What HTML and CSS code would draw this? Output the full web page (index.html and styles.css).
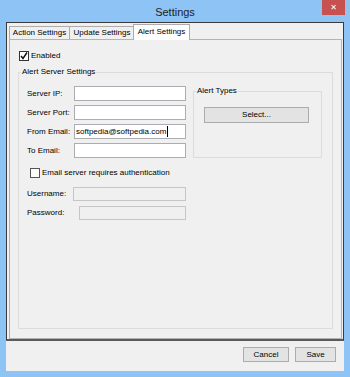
FILE: index.html
```html
<!DOCTYPE html>
<html>
<head>
<meta charset="utf-8">
<link rel="stylesheet" href="styles.css">
</head>
<body>
<div class="window">
  <div class="titlebar">
    <div class="title">Settings</div>
    <div class="close">&#x2715;</div>
  </div>
  <div class="client">
    <div class="frame">
      <div class="tabs">
        <div class="tab tab-action">Action Settings</div>
        <div class="tab tab-update">Update Settings</div>
        <div class="tab tab-alert active">Alert Settings</div>
      </div>
      <div class="panel">
        <div class="check-row enabled-row">
          <span class="checkbox"><svg width="8" height="8" viewBox="0 0 8 8"><polyline points="1,4 3,6.5 7,0.5" fill="none" stroke="#111" stroke-width="1.5"/></svg></span>
          <span>Enabled</span>
        </div>
        <div class="group server-group">
          <div class="group-label">Alert Server Settings</div>
          <div class="server-body">
            <div class="left-col">
              <div class="field-rows">
                <div class="field"><span class="lbl">Server IP:</span><div class="textbox"></div></div>
                <div class="field"><span class="lbl">Server Port:</span><div class="textbox"></div></div>
                <div class="field"><span class="lbl">From Email:</span><div class="textbox"><span>softpedia@softpedia.com</span><span class="caret"></span></div></div>
                <div class="field"><span class="lbl">To Email:</span><div class="textbox"></div></div>
              </div>
              <div class="check-row auth-row">
                <span class="checkbox"></span>
                <span>Email server requires authentication</span>
              </div>
              <div class="auth-rows">
                <div class="field"><span class="lbl lbl-user">Username:</span><div class="textbox disabled"></div></div>
                <div class="field"><span class="lbl lbl-pass">Password:</span><div class="textbox disabled"></div></div>
              </div>
            </div>
            <div class="group types-group">
              <div class="group-label">Alert Types</div>
              <div class="btn select-btn">Select...</div>
            </div>
          </div>
        </div>
      </div>
    </div>
    <div class="buttons">
      <div class="btn cancel-btn">Cancel</div>
      <div class="btn save-btn">Save</div>
    </div>
  </div>
</div>
</body>
</html>
```
FILE: styles.css
```css
html, body {
  margin: 0;
  padding: 0;
}
body {
  width: 350px;
  height: 377px;
  overflow: hidden;
  background: #8dc4f5;
  font-family: "Liberation Sans", Arial, sans-serif;
  font-size: 8px;
  line-height: 10px;
  color: #000;
}
.window {
  display: flex;
  flex-direction: column;
  height: 377px;
}
.titlebar {
  height: 22px;
  display: grid;
  grid-template-columns: 1fr auto 1fr;
  padding: 0 5px;
}
.title {
  grid-column: 2;
  font-size: 11px;
  line-height: 14px;
  padding-top: 5px;
  color: #222;
}
.close {
  grid-column: 3;
  justify-self: end;
  align-self: start;
  width: 23px;
  height: 15px;
  background: #c75050;
  color: #fff;
  font-size: 8px;
  font-weight: bold;
  display: flex;
  align-items: center;
  justify-content: center;
  font-family: "DejaVu Sans", sans-serif;
}
.client {
  flex: 1;
  margin: 0 6px 6px;
  background: #f0f0f0;
  display: flex;
  flex-direction: column;
}
.frame {
  height: 319px;
  box-sizing: border-box;
  border: 1px solid #3a3a3a;
  border-bottom: 2px solid #5a5a5a;
  padding: 1px 1px 0 2px;
  display: flex;
  flex-direction: column;
}
.tabs {
  display: flex;
  height: 15px;
  align-items: flex-end;
  position: relative;
  z-index: 1;
}
.tab {
  box-sizing: border-box;
  height: 13px;
  border: 1px solid #acacac;
  border-bottom: none;
  background: #f0f0f0;
  text-align: center;
  line-height: 12px;
  white-space: nowrap;
}
.tab-action { width: 61px; }
.tab-update { width: 66px; margin-left: -1px; }
.tab-alert {
  width: 57px;
  margin-left: -2px;
}
.tab.active {
  height: 16px;
  margin-bottom: -1px;
  background: #fff;
  line-height: 14px;
}
.panel {
  flex: 1;
  box-sizing: border-box;
  border: 1px solid #b4b4b4;
  background: #f0f0f0;
  padding: 0 8px;
  display: flex;
  flex-direction: column;
}
.check-row {
  display: flex;
  align-items: center;
  height: 10px;
  white-space: nowrap;
}
.checkbox {
  box-sizing: border-box;
  width: 10px;
  height: 10px;
  border: 1px solid #333;
  background: #fff;
  display: flex;
  align-items: center;
  justify-content: center;
  flex: none;
}
.enabled-row {
  margin-top: 11px;
  padding-left: 1px;
  gap: 2px;
}
.group {
  box-sizing: border-box;
  border: 1px solid #dcdcdc;
}
.group-label {
  width: max-content;
  margin: -6px 0 0 2px;
  padding: 0 1px;
  background: #f0f0f0;
  line-height: 10px;
}
.server-group {
  margin-top: 11px;
  height: 257px;
}
.server-body {
  display: flex;
  align-items: flex-start;
  padding: 9px 10px 0 8px;
  gap: 7px;
}
.left-col {
  width: 159px;
  display: flex;
  flex-direction: column;
}
.field-rows {
  display: flex;
  flex-direction: column;
  gap: 4px;
}
.field {
  display: flex;
  align-items: center;
  height: 15px;
}
.lbl {
  width: 47px;
  flex: none;
  white-space: nowrap;
}
.lbl-user { width: 46px; }
.lbl-pass { width: 52px; }
.textbox {
  flex: 1;
  box-sizing: border-box;
  height: 15px;
  border: 1px solid #abadb3;
  background: #fff;
  padding: 0 1px;
  display: flex;
  align-items: center;
  white-space: nowrap;
}
.caret {
  width: 1px;
  height: 11px;
  background: #000;
  margin-left: 1px;
}
.textbox.disabled {
  background: #f0f0f0;
  border-color: #c6c6c6;
  height: 14px;
}
.auth-row {
  margin-top: 10px;
  padding-left: 3px;
  gap: 2px;
}
.auth-row .checkbox {
  border-color: #555;
}
.auth-rows {
  margin-top: 9px;
  display: flex;
  flex-direction: column;
  gap: 5px;
}
.auth-rows .field { height: 14px; }
.types-group {
  width: 129px;
  height: 67px;
  margin-top: 5px;
  flex: none;
}
.btn {
  box-sizing: border-box;
  border: 1px solid #acacac;
  background: #e3e3e3;
  display: flex;
  align-items: center;
  justify-content: center;
  white-space: nowrap;
}
.select-btn {
  width: 105px;
  height: 16px;
  margin: 11px 0 0 10px;
}
.buttons {
  display: flex;
  justify-content: flex-end;
  gap: 6px;
  margin-top: 6px;
  padding-right: 8px;
}
.cancel-btn { width: 46px; height: 15px; }
.save-btn { width: 41px; height: 15px; }
```
